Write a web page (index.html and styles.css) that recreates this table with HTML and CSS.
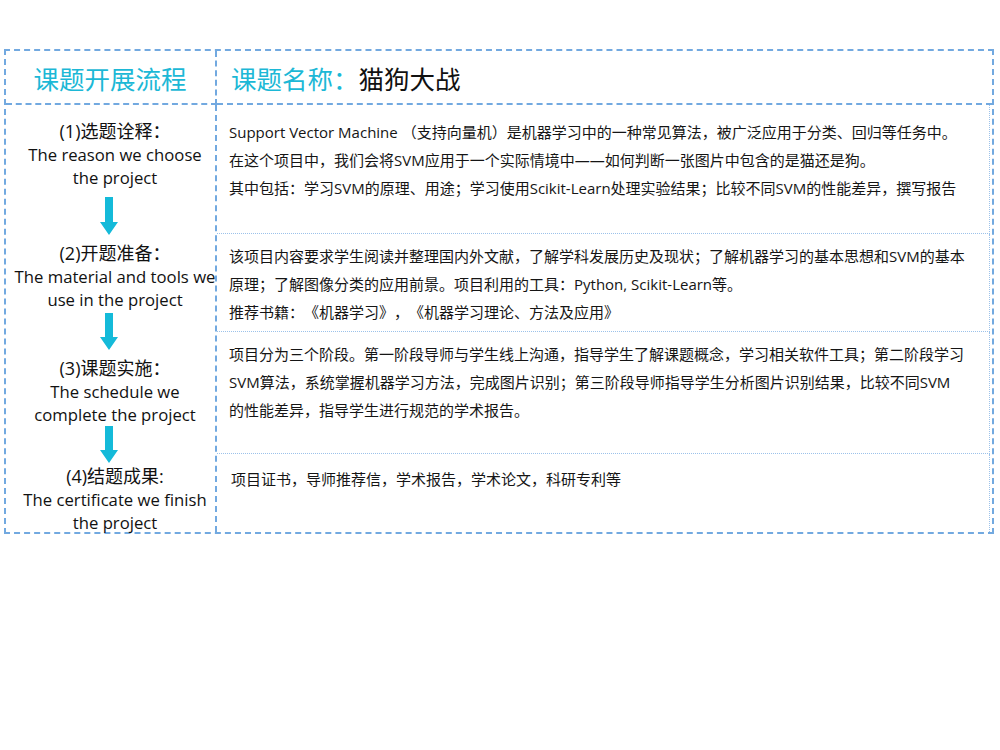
FILE: index.html
```html
<!DOCTYPE html>
<html lang="zh-CN">
<head>
<meta charset="utf-8">
<title>课题开展流程</title>
<link rel="stylesheet" href="styles.css">
</head>
<body>
<div class="page">
  <div class="board">
    <div class="head-left">课题开展流程</div>
    <div class="head-right"><span class="accent">课题名称：</span>猫狗大战</div>

    <div class="flow">
      <div class="step">
        <div class="step-title">(1)选题诠释：</div>
        <div class="step-en">The reason we choose<br>the project</div>
      </div>
      <div class="arrow arrow-1"><svg width="18" height="38" viewBox="0 0 18 38"><path d="M5 0H13V25H18L9 38L0 25H5Z" fill="#14bad9"/></svg></div>
      <div class="step">
        <div class="step-title">(2)开题准备：</div>
        <div class="step-en">The material and tools we<br>use in the project</div>
      </div>
      <div class="arrow arrow-2"><svg width="18" height="37" viewBox="0 0 18 37"><path d="M5 0H13V24H18L9 37L0 24H5Z" fill="#14bad9"/></svg></div>
      <div class="step">
        <div class="step-title">(3)课题实施：</div>
        <div class="step-en">The schedule we<br>complete the project</div>
      </div>
      <div class="arrow arrow-3"><svg width="18" height="37" viewBox="0 0 18 37"><path d="M5 0H13V24H18L9 37L0 24H5Z" fill="#14bad9"/></svg></div>
      <div class="step">
        <div class="step-title">(4)结题成果:</div>
        <div class="step-en">The certificate we finish<br>the project</div>
      </div>
    </div>

    <div class="details">
      <div class="cell cell-1">Support Vector Machine （支持向量机）是机器学习中的一种常见算法，被广泛应用于分类、回归等任务中。<br>在这个项目中，我们会将SVM应用于一个实际情境中——如何判断一张图片中包含的是猫还是狗。<br>其中包括：学习SVM的原理、用途；学习使用Scikit-Learn处理实验结果；比较不同SVM的性能差异，撰写报告</div>
      <div class="cell cell-2">该项目内容要求学生阅读并整理国内外文献，了解学科发展历史及现状；了解机器学习的基本思想和SVM的基本<br>原理；了解图像分类的应用前景。项目利用的工具：Python, Scikit-Learn等。<br>推荐书籍：《机器学习》，《机器学习理论、方法及应用》</div>
      <div class="cell cell-3">项目分为三个阶段。第一阶段导师与学生线上沟通，指导学生了解课题概念，学习相关软件工具；第二阶段学习<br>SVM算法，系统掌握机器学习方法，完成图片识别；第三阶段导师指导学生分析图片识别结果，比较不同SVM<br>的性能差异，指导学生进行规范的学术报告。</div>
      <div class="cell cell-4">项目证书，导师推荐信，学术报告，学术论文，科研专利等</div>
    </div>
  </div>
</div>
</body>
</html>
```

FILE: styles.css
```css
* { box-sizing: border-box; }

html, body {
  margin: 0;
  padding: 0;
  background: #ffffff;
}

body {
  font-family: "Open Sans", "Noto Sans CJK SC", sans-serif;
  color: #1c1c1c;
  text-spacing-trim: space-all;
}

.page {
  padding: 49px 0 0 4px;
  width: 1000px;
  height: 750px;
}

.board {
  width: 990px;
  display: grid;
  grid-template-columns: 211px 1fr;
  grid-template-rows: 54px auto;
  border: 2px dashed #72a9e0;
}

.head-left {
  border-right: 2px dashed #72a9e0;
  border-bottom: 2px dashed #72a9e0;
  display: flex;
  align-items: center;
  justify-content: center;
  font-size: 25.5px;
  color: #1cb8d6;
  padding-right: 1px;
}

.head-right {
  border-bottom: 2px dashed #72a9e0;
  display: flex;
  align-items: center;
  padding-left: 14px;
  font-size: 25.5px;
  color: #111;
}

.accent { color: #1cb8d6; }

.flow {
  border-right: 2px dashed #72a9e0;
  display: flex;
  flex-direction: column;
  align-items: center;
  padding-top: 14px;
  height: 427px;
}

.step {
  text-align: center;
  white-space: nowrap;
  color: #111;
  padding-left: 9px;
}

.step-title {
  font-size: 18px;
  line-height: 24px;
}

.step-en {
  font-size: 16.7px;
  line-height: 23px;
}

.arrow {
  display: flex;
  justify-content: center;
  padding-right: 3px;
}
.arrow svg { display: block; }
.arrow-1 { margin: 8px 0 6px; }
.arrow-2 { margin: 2px 0 6px; }
.arrow-3 { margin: 0 0 1px; }

.details {
  display: flex;
  flex-direction: column;
  padding-right: 2px;
}

.cell {
  border-right: 1px dotted #9cc2ea;
  border-bottom: 1px dotted #9cc2ea;
  font-size: 15px;
  line-height: 28px;
  white-space: nowrap;
  padding-left: 12px;
  color: #151515;
}

.cell-1 { height: 129px; padding-top: 13px; }
.cell-2 { height: 98px; padding-top: 8px; }
.cell-3 { height: 122px; padding-top: 8px; }
.cell-4 { flex: 1; border-bottom: none; padding-top: 11px; padding-left: 14px; }
```
